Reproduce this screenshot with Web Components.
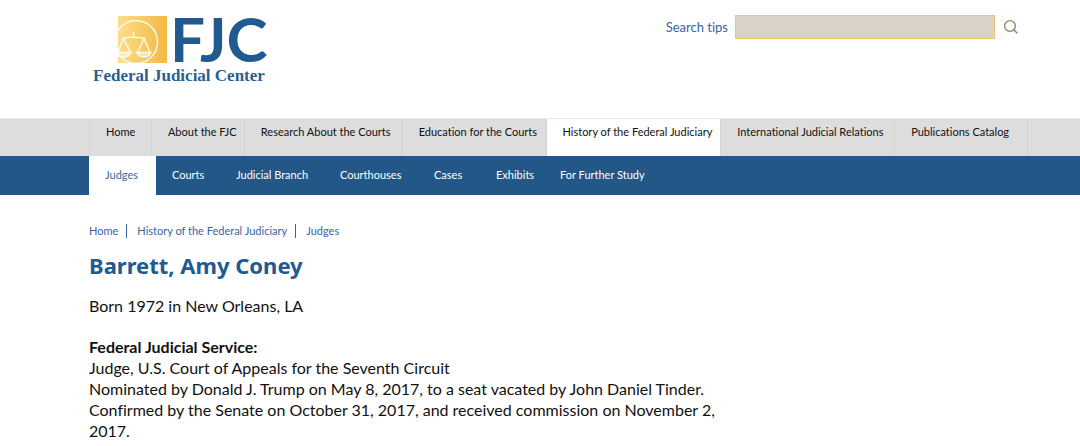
<!DOCTYPE html>
<html lang="en">
<head>
<meta charset="utf-8">
<title>Barrett, Amy Coney | Federal Judicial Center</title>
<style>
:root{--blue:#225787;--link:#3864a8;--left:89px;--right:52px}
body{margin:0;background:#fff;color:#111;font-family:Lato,"Open Sans",sans-serif;font-variant-ligatures:none}
</style>
</head>
<body>
<fjc-page></fjc-page>
<script>
const define = (name, html) => customElements.define(name, class extends HTMLElement {
  constructor() {
    super();
    this.attachShadow({ mode: "open" }).innerHTML = html;
  }
});

define("fjc-logo", `
<style>
:host{display:block}
a{display:block}
svg{display:block;overflow:visible}
.name{font:bold 17px "Liberation Serif",serif;fill:#2a5f93}
.abbr{font:bold 62px Lato,sans-serif;fill:#205a90}
</style>
<a href="#" aria-label="Federal Judicial Center">
<svg width="180" height="72" viewBox="0 0 180 72">
  <defs><linearGradient id="gold"><stop offset="0" stop-color="#fddd8b"/><stop offset="1" stop-color="#f2b944"/></linearGradient>
  <clipPath id="sq"><rect x="29" y="1" width="49" height="47"/></clipPath></defs>
  <rect x="29" y="1" width="49" height="47" fill="url(#gold)"/>
  <g fill="none" stroke="#fffaf0" stroke-width="1.4" clip-path="url(#sq)">
    <circle cx="47" cy="27" r="21.5"/>
    <path d="M44.500 17v6M33 23.500Q44 21 56 23.500M34.500 23.500l-6 14M34.500 23.500l7 14M55 23.500l-6.500 14M55 23.500l6 14"/>
    <path d="M27 37.500h15q-2 4.500-7.500 4.500T27 37.500zM47.500 37.500h14.500q-2 4.500-7 4.500t-7.500-4.500z" fill="#fffaf0" fill-opacity=".5"/>
  </g>
  <text class="abbr" x="81" y="47">FJC</text>
  <text class="name" x="4" y="66">Federal Judicial Center</text>
</svg></a>`);

define("fjc-search", `
<style>
:host{display:block}
form{display:flex;align-items:center;margin:0}
a{color:var(--link);text-decoration:none;font-size:13px;line-height:24px;margin-right:7px}
input{box-sizing:border-box;width:260px;height:24px;border:1px solid #f2c465;border-radius:0;background:#dad2c7;padding:0 6px;font:inherit;outline:0}
button{border:0;background:none;padding:0;margin-left:8px;width:16px;height:16px}
svg{display:block}
</style>
<form>
<a href="#">Search tips</a>
<input type="text" aria-label="Search">
<button type="button" aria-label="Search"><svg width="16" height="16" viewBox="0 0 16 16" fill="none" stroke="#968660" stroke-width="1.400" stroke-linecap="round"><circle cx="7" cy="7" r="5.400"/><path d="M11 11l3 3"/></svg></button>
</form>`);

define("fjc-header", `
<style>
:host{display:flex;justify-content:space-between;align-items:flex-start;padding:15px 61px 31px var(--left)}
</style>
<fjc-logo></fjc-logo><fjc-search></fjc-search>`);

define("fjc-main-nav", `
<style>
:host{display:block;background:#ddd;border-top:1px solid #e8e8e8;padding:0 var(--right) 0 var(--left)}
nav{display:grid;grid-template-columns:62fr 93fr 158fr 144fr 175fr 174fr 133fr;border-left:1px solid #d3d3d3}
a{box-sizing:border-box;height:37px;padding:4px 0 0 16px;border-right:1px solid #d3d3d3;color:#111;text-decoration:none;font-size:11px;line-height:18px;white-space:nowrap}
a[aria-current]{background:#fff}
</style>
<nav aria-label="Main"><a href="#">Home</a><a href="#">About the FJC</a><a href="#">Research About the Courts</a><a href="#">Education for the Courts</a><a href="#" aria-current="true">History of the Federal Judiciary</a><a href="#">International Judicial Relations</a><a href="#">Publications Catalog</a></nav>`);

define("fjc-sub-nav", `
<style>
:host{display:block;background:var(--blue);padding:0 var(--right) 0 var(--left)}
nav{display:grid;grid-template-columns:67fr 64fr 104fr 94fr 62fr 64fr 484fr}
a{box-sizing:border-box;height:39px;padding:9px 0 0 16px;color:#fff;text-decoration:none;font-size:11px;line-height:20px;white-space:nowrap}
a[aria-current]{background:#fff;color:#3d689a}
</style>
<nav aria-label="History"><a href="#" aria-current="page">Judges</a><a href="#">Courts</a><a href="#">Judicial Branch</a><a href="#">Courthouses</a><a href="#">Cases</a><a href="#">Exhibits</a><a href="#">For Further Study</a></nav>`);

define("fjc-breadcrumb", `
<style>
:host{display:block}
nav{display:flex}
a{color:var(--link);text-decoration:none;font-size:11px;line-height:14px}
a+a{border-left:1px solid var(--link);margin-left:8px;padding-left:10px}
</style>
<nav aria-label="Breadcrumb"><a href="#">Home</a><a href="#">History of the Federal Judiciary</a><a href="#">Judges</a></nav>`);

define("fjc-biography", `
<style>
:host{display:block;max-width:630px}
h1{margin:12px 0 15px;color:#205a90;font:bold 22px/30px "Noto Sans","Open Sans",sans-serif}
p{margin:0 0 20px;font-size:16px;line-height:21px}
</style>
<h1>Barrett, Amy Coney</h1>
<p>Born 1972 in New Orleans, LA</p>
<p><strong>Federal Judicial Service:</strong><br>Judge, U.S. Court of Appeals for the Seventh Circuit<br>Nominated by Donald J. Trump on May 8, 2017, to a seat vacated by John Daniel Tinder.<br>Confirmed by the Senate on October 31, 2017, and received commission on November 2, 2017.</p>`);

define("fjc-page", `
<style>
:host{display:block}
main{padding:29px var(--right) 0 var(--left)}
</style>
<fjc-header></fjc-header>
<fjc-main-nav></fjc-main-nav>
<fjc-sub-nav></fjc-sub-nav>
<main><fjc-breadcrumb></fjc-breadcrumb><fjc-biography></fjc-biography></main>`);
</script>
</body>
</html>
